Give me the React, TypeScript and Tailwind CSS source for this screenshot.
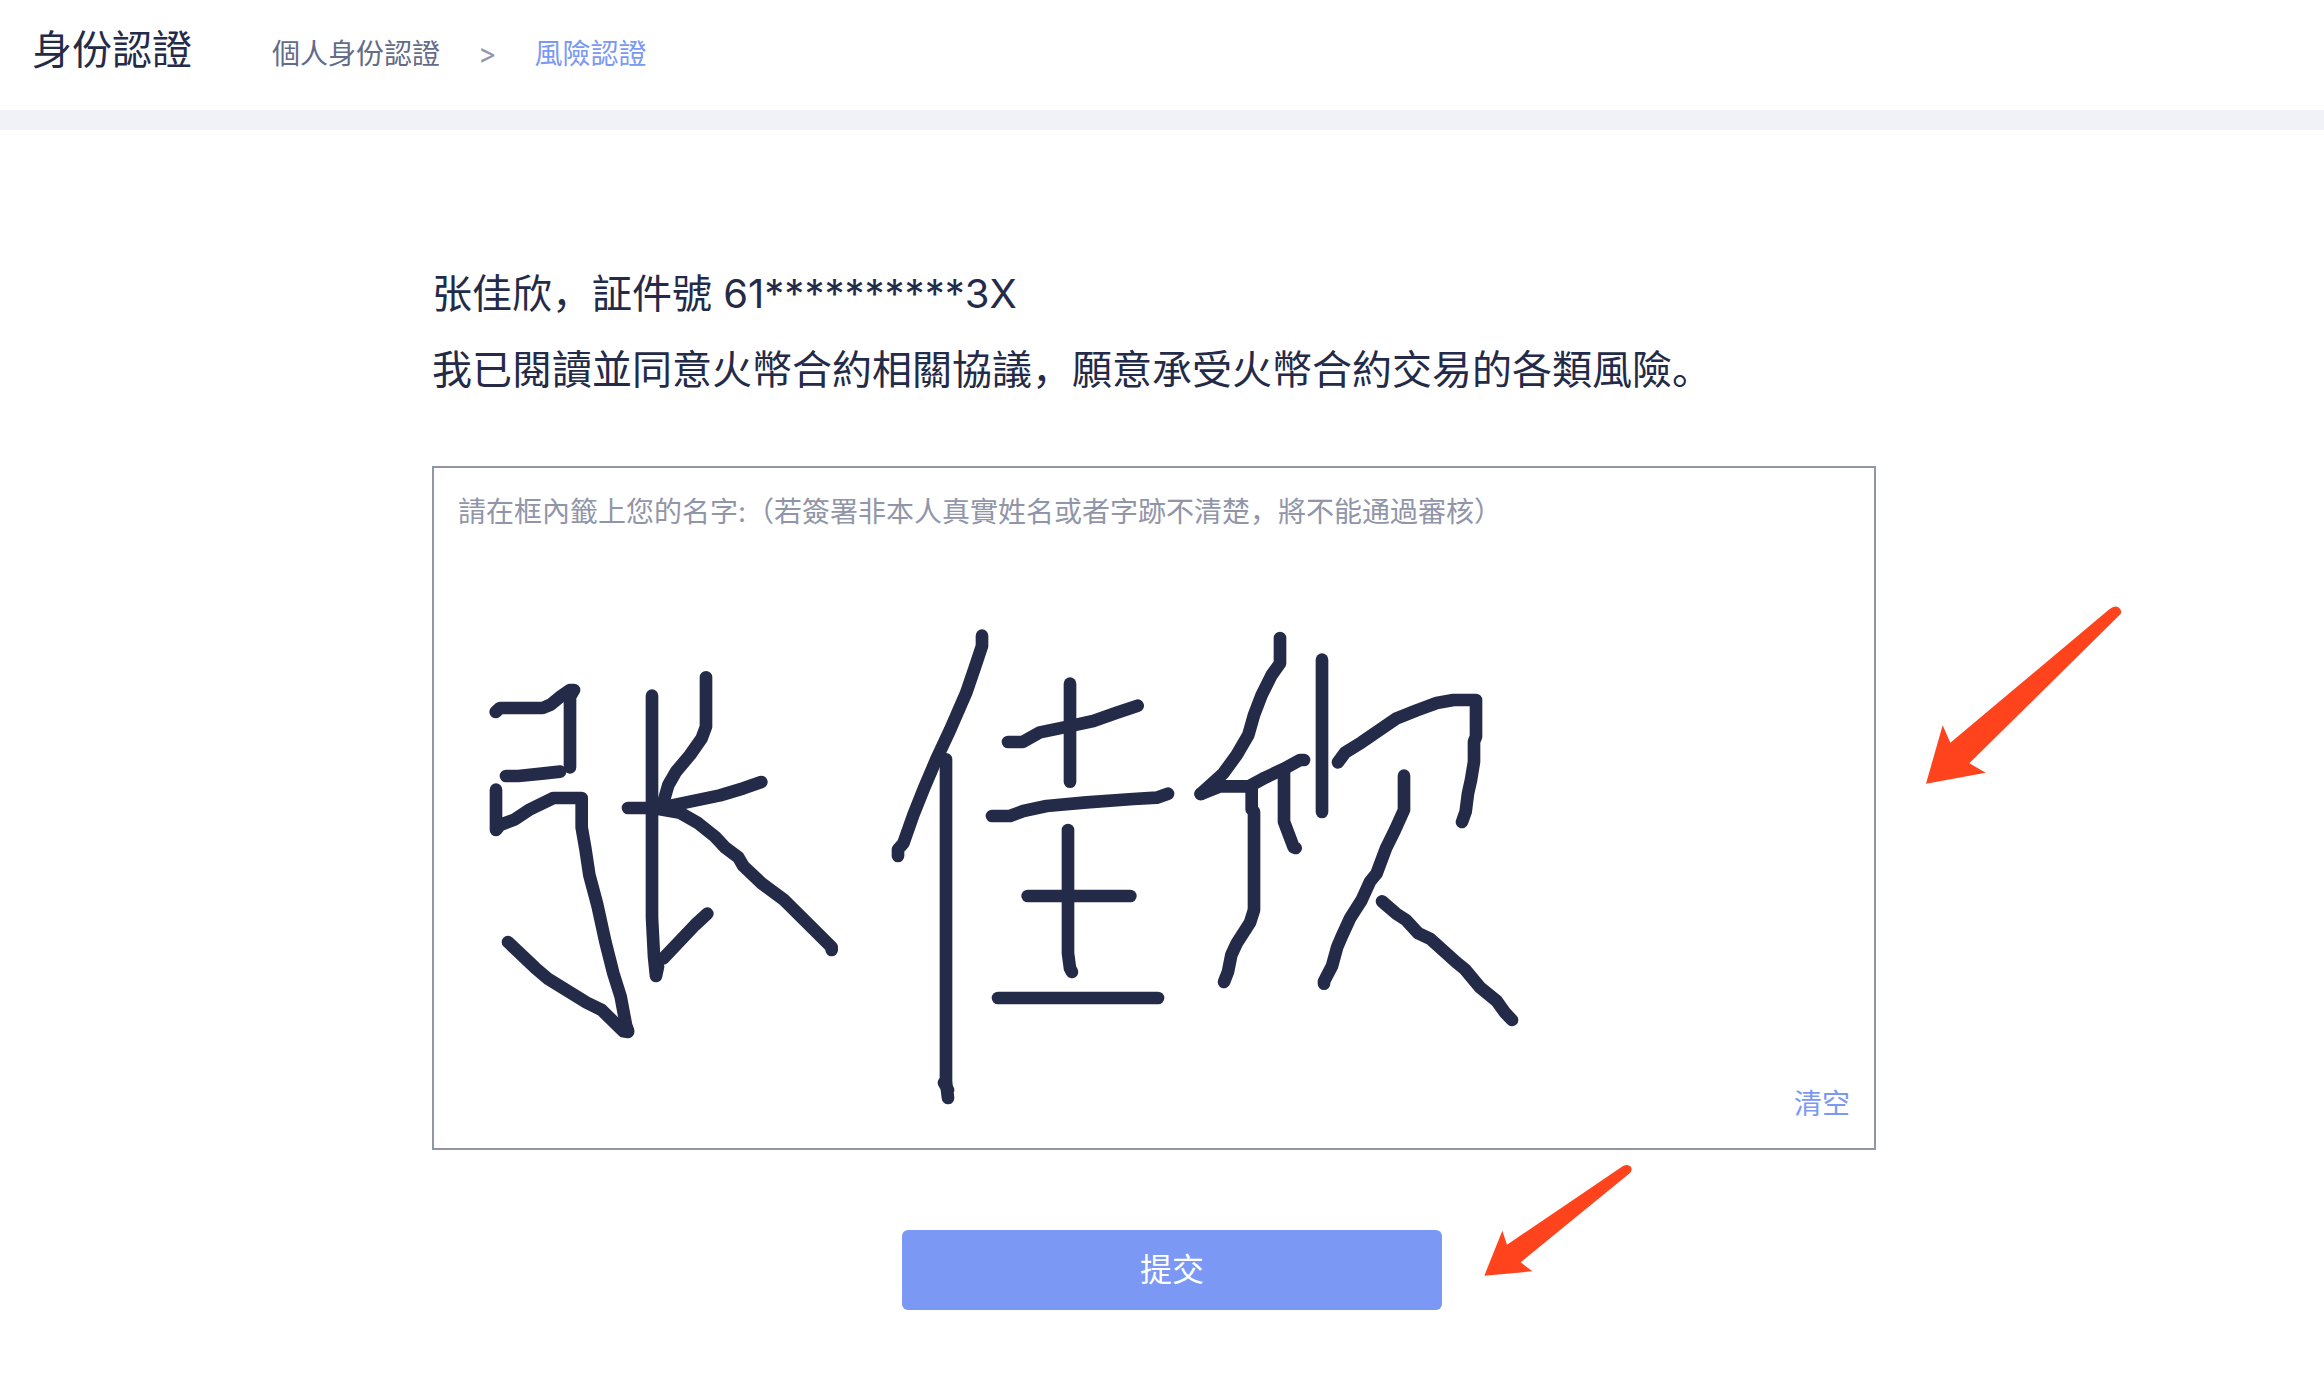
import { useState } from "react";

type Glyph = { name: string; transform: string; strokes: string[] };

const SIGNATURE: Glyph[] = [
  {
    name: "zhang",
    transform: "translate(78 456)",
    strokes: [
      "M107 276 L120 264 H248 L272 254 L305 227 L330 210 H342 L330 230 V442",
      "M138 468 H175 L245 461 L300 455",
      "M108 509 V630 L120 615 L165 598 L210 568 L280 534 H365 V622 L376 685 L388 765 L412 855 L436 965 L460 1060 L482 1130 L498 1215 L504 1232",
      "M144 966 L225 1043 L262 1075 L380 1148 L425 1170 L490 1234 L504 1236",
      "M576 227 V893 L582 1010 L588 1068 L594 1040",
      "M738 172 V320 L725 355 L690 405 L648 455 L625 495 L612 540",
      "M504 564 H600 L690 545 L780 526 L850 505 L904 486",
      "M600 568 L660 578 L715 610 L765 650 L795 682 L835 712 L850 738 L905 790 L970 838 L1115 982 V990",
      "M742 881 L705 915 L610 1015",
    ],
  },
  {
    name: "jia",
    transform: "translate(1278 426)",
    strokes: [
      "M366 77 V108 L342 180 L318 250 L270 360 L228 450 L192 535 L160 615 L130 700 L114 718 V738",
      "M258 448 V1415 L264 1464 M252 1418 L264 1440",
      "M630 221 V515",
      "M444 396 H488 L540 367 L612 352 L700 333 L770 308 L833 287",
      "M396 618 H450 L490 603 L560 588 L680 577 L820 567 L890 563 L924 551",
      "M624 660 V1030 L630 1075 L636 1086",
      "M503 858 H811",
      "M414 1164 H894",
    ],
  },
  {
    name: "xin",
    transform: "translate(2208 426)",
    strokes: [
      "M330 84 V160 L305 195 L275 255 L252 315 L235 375 L200 435 L160 490 L92 552",
      "M92 552 L150 529 H237 L285 503 L345 475 L390 450 H402",
      "M245 535 V598 L252 605 V900 L240 938 L200 1000 L184 1035 L174 1085 L162 1116",
      "M342 480 V635 L357 675 L371 712 L377 714",
      "M456 149 V606",
      "M504 457 L525 428 L575 397 L680 325 L740 301 L800 279 L850 270 H918 V380 L912 395 V455 L903 510 L894 550 L887 605 L876 636",
      "M702 497 V600 L675 660 L648 715 L620 790 L600 815 L575 870 L540 925 L515 980 L502 1010 L486 1068 L462 1114 V1121",
      "M636 874 L680 912 L708 930 L745 970 L780 986 L860 1058 L885 1078 L930 1132 L980 1173 L1005 1208 L1026 1230",
    ],
  },
];

function Signature() {
  return (
    <svg
      className="absolute inset-0 h-full w-full"
      viewBox="0 0 4320 2040"
      fill="none"
      stroke="#242b49"
      strokeWidth="38"
      strokeLinecap="round"
      strokeLinejoin="round"
      aria-hidden="true"
    >
      {SIGNATURE.map((glyph) => (
        <g key={glyph.name} transform={glyph.transform}>
          {glyph.strokes.map((d) => (
            <path key={d} d={d} />
          ))}
        </g>
      ))}
    </svg>
  );
}

export default function App() {
  const [signed, setSigned] = useState(true);

  return (
    <div className="min-h-screen bg-white font-[Inter,'Noto_Sans_CJK_SC',sans-serif] text-[#242b49]">
      {/* Header */}
      <header className="flex items-baseline gap-20 border-b-20 border-[#f1f2f7] px-8 pt-5 pb-[30px]">
        <h1 className="text-[40px] leading-[60px]">身份認證</h1>
        <nav className="flex items-baseline gap-[38px] text-[28px] leading-[40px]">
          <a href="#identity" className="text-[#626b8a]">
            個人身份認證
          </a>
          <span className="text-[#9296a8]">&gt;</span>
          <a href="#risk" className="text-[#7b98f4]" aria-current="page">
            風險認證
          </a>
        </nav>
      </header>

      <main className="pt-[126px] pb-[70px] pl-5">
        <div className="mx-auto max-w-[1480px]">
          {/* Statement */}
          <div className="text-[40px] leading-[76px]">
            <p>张佳欣，証件號 61**********3X</p>
            <p>我已閱讀並同意火幣合約相關協議，願意承受火幣合約交易的各類風險。</p>
          </div>

          {/* Signature pad */}
          <div className="relative mt-[58px] mr-9">
            <div className="relative flex min-h-[684px] flex-col justify-between border-2 border-[#9195a8] px-6 py-[22px] text-[28px] leading-[44px]">
              <p className="text-[#9195a8]">
                請在框內籤上您的名字:（若簽署非本人真實姓名或者字跡不清楚，將不能通過審核）
              </p>
              {signed && <Signature />}
              <button
                type="button"
                className="relative self-end text-[#7b98f4]"
                onClick={() => setSigned(false)}
              >
                清空
              </button>
            </div>
            <svg
              className="absolute top-[124px] left-full ml-6 w-60"
              viewBox="0 0 720 630"
              fill="#ff431c"
              aria-hidden="true"
            >
              <path d="M78 581 L128 406 L151 458 L628 58 Q648 42 660 56 Q668 68 658 76 L208 520 L257 548 Z" />
            </svg>
          </div>

          {/* Submit */}
          <div className="relative mx-auto mt-20 w-[540px]">
            <button
              type="submit"
              className="h-20 w-full rounded-md bg-[#7b99f4] text-[32px] text-white"
            >
              提交
            </button>
            <svg
              className="absolute -top-[70px] left-full ml-[38px] w-40"
              viewBox="60 300 480 360"
              fill="#ff431c"
              aria-hidden="true"
            >
              <path d="M73 647 L127 512 L141 554 L488 319 Q504 310 513 321 Q518 332 510 339 L182 607 L217 634 Z" />
            </svg>
          </div>
        </div>
      </main>
    </div>
  );
}
